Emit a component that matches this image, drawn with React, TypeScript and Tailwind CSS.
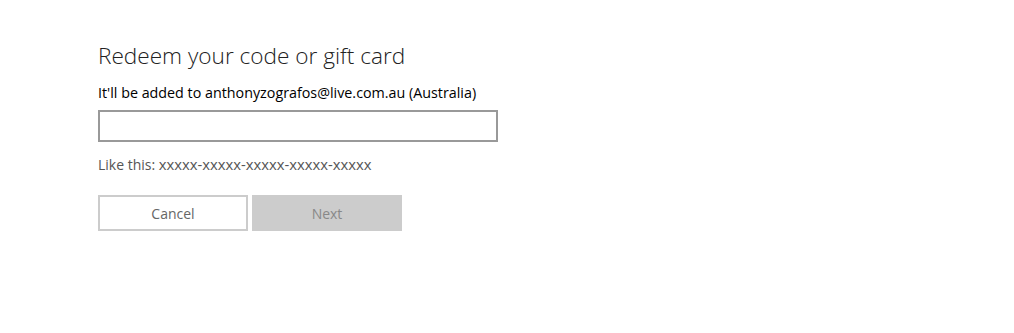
import React from 'react';

const App: React.FC = () => {
  return (
    <div
      className="w-[1014px] h-[333px] bg-white text-black"
      style={{ fontFamily: '"Open Sans", "Noto Sans", Arial, sans-serif' }}
    >
      <div className="pl-[98px] pt-[39px] flex flex-col">
        <h1 className="text-[22.6px] leading-[34px] font-light text-[#222]">Redeem your code or gift card</h1>

        <p className="mt-[10px] text-[14.3px] leading-[20px]">
          It'll be added to anthonyzografos@live.com.au (Australia)
        </p>

        <input
          type="text"
          className="mt-[7px] w-[400px] h-[32px] border-2 border-[#999] bg-white px-2 text-[14px] outline-none"
        />

        <p className="mt-[12px] h-[20px] text-[14px] leading-[20px] text-[#555]">
          Like this: <span className="text-[14.8px] leading-[20px]">xxxxx-xxxxx-xxxxx-xxxxx-xxxxx</span>
        </p>

        <div className="mt-[21px] flex gap-[4px]">
          <button className="w-[150px] h-[36px] border-2 border-[#ccc] bg-white text-[14px] text-[#666]">
            Cancel
          </button>
          <button
            disabled
            className="w-[150px] h-[36px] bg-[#ccc] text-[14px] text-[#888]"
          >
            Next
          </button>
        </div>
      </div>
    </div>
  );
};

export default App;
